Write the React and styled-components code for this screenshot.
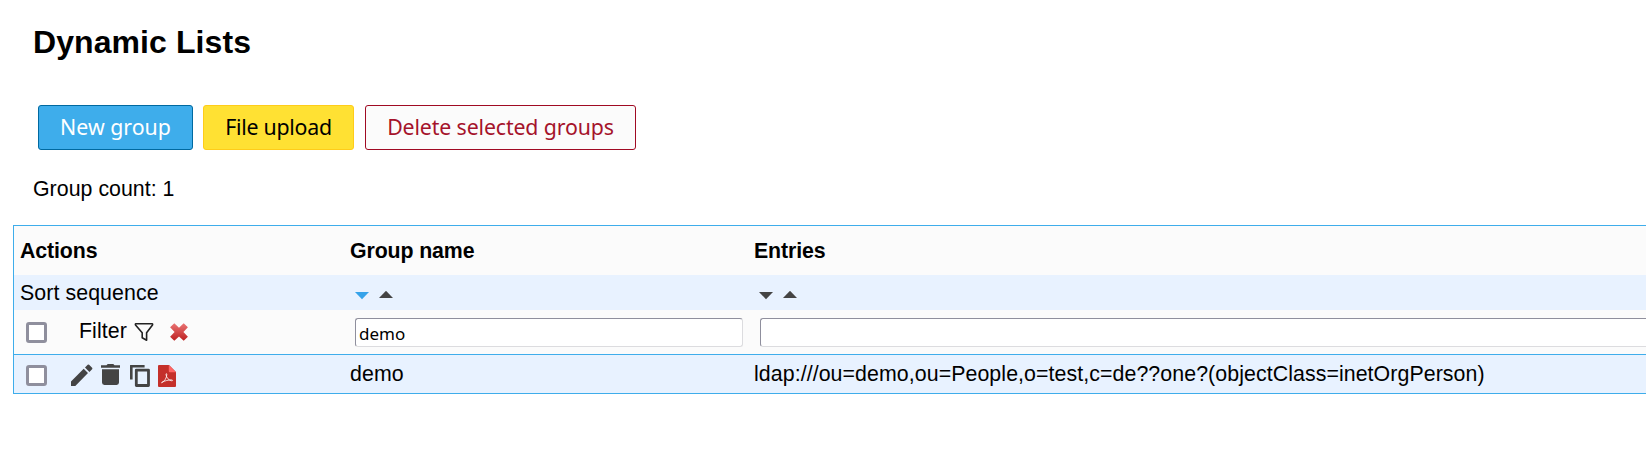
import React from "react";
import styled, { createGlobalStyle } from "styled-components";

const GlobalStyle = createGlobalStyle`
  *, *::before, *::after { box-sizing: border-box; }
  body {
    margin: 0;
    overflow: hidden;
    background: #fff;
    color: #000;
    font-family: "Liberation Sans", Arial, sans-serif;
    font-size: 21.33px;
    letter-spacing: 0.08px;
  }
`;

const Page = styled.main`
  padding-left: 13px;
`;

const Intro = styled.header`
  padding: 23px 0 0 20px;
`;

const Title = styled.h1`
  margin: 0;
  font-size: 32px;
  line-height: 38px;
`;

const Toolbar = styled.div`
  display: flex;
  padding: 44px 0 0 5px;
`;

const tones = {
  primary: { bg: "#3eadeb", border: "#0069a0", text: "#fff", tracking: 0 },
  upload: { bg: "#ffe133", border: "#ffcc19", text: "#000", tracking: -0.25 },
  danger: { bg: "#fbfbfb", border: "#a00a23", text: "#a5132b", tracking: -0.14 },
};

const Button = styled.button`
  width: ${(p) => p.$width}px;
  height: 45px;
  margin-right: ${(p) => p.$gap || 0}px;
  padding: 0 0 3px;
  border: 1px solid ${(p) => tones[p.$tone].border};
  border-radius: 3px;
  background: ${(p) => tones[p.$tone].bg};
  color: ${(p) => tones[p.$tone].text};
  font-family: "Noto Sans", sans-serif;
  font-size: 21.33px;
  letter-spacing: ${(p) => tones[p.$tone].tracking}px;
  white-space: nowrap;
`;

const Count = styled.p`
  margin: 27px 0 0;
  line-height: 24px;
  letter-spacing: 0.03px;
`;

const Table = styled.section`
  width: 1660px;
  margin-top: 24px;
  border: 1px solid #3eadeb;
`;

const Row = styled.div`
  display: grid;
  grid-template-columns: 330px 404px 1fr;
  align-items: center;
  height: ${(p) => p.$height}px;
  background: ${(p) => (p.$tinted ? "#e8f2ff" : "#fbfbfb")};
  border-top: ${(p) => (p.$ruled ? "1px solid #3eadeb" : "none")};
  font-weight: ${(p) => (p.$heading ? "bold" : "normal")};
  letter-spacing: ${(p) => (p.$heading ? "-0.12px" : "0.08px")};
`;

const Cell = styled.div`
  display: flex;
  align-items: center;
  height: 100%;
  padding: ${(p) => p.$drop || 0}px 6px 0;
  white-space: nowrap;
`;

const SortPair = styled.div`
  display: flex;
  gap: 10px;
  padding: 6px 0 0 5px;
`;

const Arrow = styled.svg`
  display: block;
  width: 14px;
  height: 9px;
  fill: ${(p) => (p.$active ? "#36a3ea" : "#444")};
`;

const Checkbox = styled.input`
  appearance: none;
  width: 21px;
  height: 21px;
  margin: ${(p) => p.$top}px 0 0 6px;
  border: 3px solid #8f8f9d;
  border-radius: 3px;
  background: #fff;
`;

const FilterLabel = styled.span`
  width: 48px;
  margin: 0 6px 2px 32px;
`;

const Field = styled.input`
  flex: none;
  width: ${(p) => p.$width}px;
  height: 29px;
  margin-top: 1px;
  margin-left: ${(p) => p.$indent}px;
  padding: 1px 3px 0;
  border: 1px solid;
  border-color: #8f8f9d #dcdcdf #dcdcdf #8f8f9d;
  border-radius: 3px;
  background: #fff;
  color: #000;
  font-family: "Noto Sans", sans-serif;
  font-size: 17px;
  letter-spacing: 0;
  outline: none;
`;

const Icon = styled.svg`
  display: block;
  flex: none;
  width: ${(p) => p.$w}px;
  height: ${(p) => p.$h}px;
  margin-left: ${(p) => p.$left || 0}px;
  margin-top: ${(p) => p.$top || 0}px;
`;

function SortControls({ active }) {
  return (
    <SortPair>
      <Arrow viewBox="0 0 14 9" $active={active}><path d="M0 1h14L7 8.200z" /></Arrow>
      <Arrow viewBox="0 0 14 9"><path d="M0 7h14L7-.2z" /></Arrow>
    </SortPair>
  );
}

export default function App() {
  return (
    <>
      <GlobalStyle />
      <Page>
        <Intro>
          <Title>Dynamic Lists</Title>
          <Toolbar>
            <Button $tone="primary" $width={155} $gap={10}>New group</Button>
            <Button $tone="upload" $width={151} $gap={11}>File upload</Button>
            <Button $tone="danger" $width={271}>Delete selected groups</Button>
          </Toolbar>
          <Count>Group count: 1</Count>
        </Intro>
        <Table>
          <Row $height={49} $heading>
            <Cell $drop={2}>Actions</Cell>
            <Cell $drop={2}>Group name</Cell>
            <Cell $drop={2}>Entries</Cell>
          </Row>
          <Row $height={35} $tinted>
            <Cell $drop={2}>Sort sequence</Cell>
            <Cell><SortControls active /></Cell>
            <Cell><SortControls /></Cell>
          </Row>
          <Row $height={44}>
            <Cell>
              <Checkbox type="checkbox" $top={1} />
              <FilterLabel>Filter</FilterLabel>
              <Icon viewBox="0 0 20 18" $w={20} $h={18} $left={1}>
                <path d="M1.800.8h16.400c.5 0 .5.7.3 1.100L12.600 9.800v7.400l-4.400-2.400V9.800L1.500 1.900C1.300 1.500 1.300.8 1.800.8z" fill="none" stroke="#222" strokeWidth="1.600" strokeLinejoin="round" />
              </Icon>
              <Icon viewBox="0 0 18 18" $w={18} $h={18} $left={16}>
                <defs>
                  <linearGradient id="cross" x1="0" y1="0" x2="0" y2="1">
                    <stop offset="0" stopColor="#ea7474" />
                    <stop offset="1" stopColor="#bd2020" />
                  </linearGradient>
                </defs>
                <path d="M4.300.3 9 4.800 13.700.3 17.900 4.200 13.400 9l4.500 4.700-4.200 4L9 13.400l-4.700 4.300-4.200-4L4.600 9 .1 4.200z" fill="url(#cross)" />
              </Icon>
            </Cell>
            <Cell><Field $width={388} $indent={5} defaultValue="demo" /></Cell>
            <Cell><Field $width={910} $indent={6} /></Cell>
          </Row>
          <Row $height={39} $tinted $ruled>
            <Cell>
              <Checkbox type="checkbox" $top={3} />
              <Icon viewBox="0 0 22 22" $w={22} $h={22} $left={24} $top={2}>
                <path d="M0 17.500 12.700 4.800l4.300 4.300L4.300 22H0zM14 3.500 16.700.8q.7-.7 1.400 0l3 3q.7.7 0 1.400L18.400 7.900z" fill="#444" />
              </Icon>
              <Icon viewBox="0 0 20 21" $w={20} $h={21} $left={8} $top={1}>
                <path d="M0 1.200h5.500L6.700 0h5.600l1.200 1.200H19v2.500H0zM1 5.300h17v13.300q0 2.400-2.400 2.400H3.400Q1 21 1 18.600z" fill="#444" />
              </Icon>
              <Icon viewBox="0 0 20 22" $w={20} $h={22} $left={9} $top={4}>
                <path d="M1.200 14.500V1.200H14.600M6.300 5.100h12.200v15.400H6.300z" fill="none" stroke="#444" strokeWidth="2.800" strokeLinejoin="round" />
              </Icon>
              <Icon viewBox="0 0 18 22" $w={18} $h={22} $left={8} $top={4}>
                <path d="M1 0h10l7 7v14q0 1-1 1H1q-1 0-1-1V1q0-1 1-1z" fill="#c4302b" />
                <path d="M10.800 0v6.200q0 1 1 1H18z" fill="#ff6464" />
                <path d="M3.800 17.600c2.700-1.100 5.100-5 5-8.300-.1-1-1-.8-.8.3.4 3.100 2.800 5.800 5.700 6.200 1.200.1 1.100-.9-.1-.9-3.200-.1-6.600.9-9.500 2.300-.7.400-.8.800-.3.400z" fill="none" stroke="#fff" strokeWidth=".8" />
              </Icon>
            </Cell>
            <Cell>demo</Cell>
            <Cell>ldap:///ou=demo,ou=People,o=test,c=de??one?(objectClass=inetOrgPerson)</Cell>
          </Row>
        </Table>
      </Page>
    </>
  );
}
